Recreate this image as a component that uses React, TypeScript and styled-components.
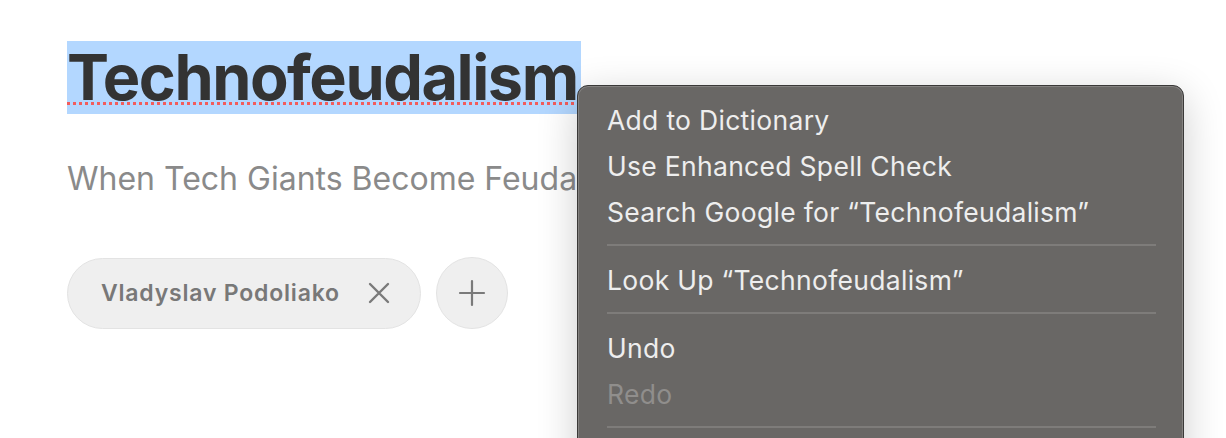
import React from "react";
import styled, { createGlobalStyle } from "styled-components";

const GlobalStyle = createGlobalStyle`
  html, body {
    margin: 0;
    padding: 0;
    background: #ffffff;
    overflow: hidden;
  }
  body {
    font-family: Inter, "Noto Sans", "Liberation Sans", sans-serif;
  }
`;

const Page = styled.div`
  position: relative;
  height: 438px;
  padding: 41px 0 0 67px;
  box-sizing: border-box;
`;

const Title = styled.h1`
  margin: 0;
  display: inline-block;
  height: 73px;
  line-height: 73px;
  padding-right: 3px;
  font-size: 63px;
  font-weight: 700;
  color: #333333;
  letter-spacing: -1.45px;
  background: #b3d7ff;
  text-decoration-line: underline;
  text-decoration-style: dotted;
  text-decoration-color: #f25c5c;
  text-decoration-thickness: 3px;
  text-underline-offset: 2px;
`;

const Subtitle = styled.p`
  margin: 45px 0 0;
  font-size: 32px;
  line-height: 40px;
  color: #8a8a8a;
  white-space: nowrap;
`;

const ChipRow = styled.div`
  display: flex;
  align-items: center;
  gap: 15px;
  margin-top: 58px;
`;

const Chip = styled.div`
  display: flex;
  align-items: center;
  gap: 28px;
  height: 71px;
  box-sizing: border-box;
  padding: 0 30px 0 33px;
  border: 1.5px solid #e3e3e3;
  border-radius: 36px;
  background: #efefef;
  color: #787878;
  font-size: 23px;
  font-weight: 600;
  letter-spacing: 0.8px;
`;

const RoundButton = styled.div`
  display: flex;
  align-items: center;
  justify-content: center;
  width: 72px;
  height: 72px;
  box-sizing: border-box;
  border: 1.5px solid #e3e3e3;
  border-radius: 50%;
  background: #efefef;
`;

const Menu = styled.div`
  position: absolute;
  left: 577px;
  top: 85px;
  width: 607px;
  box-sizing: border-box;
  padding: 11px 0 40px;
  background: #696765;
  border: 1px solid #3a3938;
  border-radius: 11px;
  box-shadow: inset 0 0 0 1px rgba(255, 255, 255, 0.18),
    0 10px 40px rgba(0, 0, 0, 0.2);
`;

const MenuItem = styled.div<{ $disabled?: boolean }>`
  height: 46px;
  line-height: 46px;
  padding-left: 29px;
  font-size: 26.5px;
  letter-spacing: 0.3px;
  color: ${(p) => (p.$disabled ? "#908e8c" : "#eeeeee")};
  white-space: nowrap;
`;

const Separator = styled.div`
  height: 2px;
  margin: 9px 27px 11px 29px;
  background: #7e7c7a;
`;

const CloseIcon = () => (
  <svg width="22" height="22" viewBox="0 0 22 22">
    <path d="M2 2 L20 20 M20 2 L2 20" stroke="#7a7a7a" strokeWidth="2.4" strokeLinecap="round" />
  </svg>
);

const PlusIcon = () => (
  <svg width="28" height="28" viewBox="0 0 28 28">
    <path d="M14 2 V26 M2 14 H26" stroke="#7a7a7a" strokeWidth="2.2" strokeLinecap="round" />
  </svg>
);

const App = () => {
  return (
    <>
      <GlobalStyle />
      <Page>
        <Title>Technofeudalism</Title>
        <Subtitle>When Tech Giants Become Feudal Lords</Subtitle>
        <ChipRow>
          <Chip>
            <span>Vladyslav Podoliako</span>
            <CloseIcon />
          </Chip>
          <RoundButton>
            <PlusIcon />
          </RoundButton>
        </ChipRow>

        <Menu>
          <MenuItem>Add to Dictionary</MenuItem>
          <MenuItem>Use Enhanced Spell Check</MenuItem>
          <MenuItem>Search Google for “Technofeudalism”</MenuItem>
          <Separator />
          <MenuItem>Look Up “Technofeudalism”</MenuItem>
          <Separator />
          <MenuItem>Undo</MenuItem>
          <MenuItem $disabled>Redo</MenuItem>
          <Separator />
        </Menu>
      </Page>
    </>
  );
};

export default App;
